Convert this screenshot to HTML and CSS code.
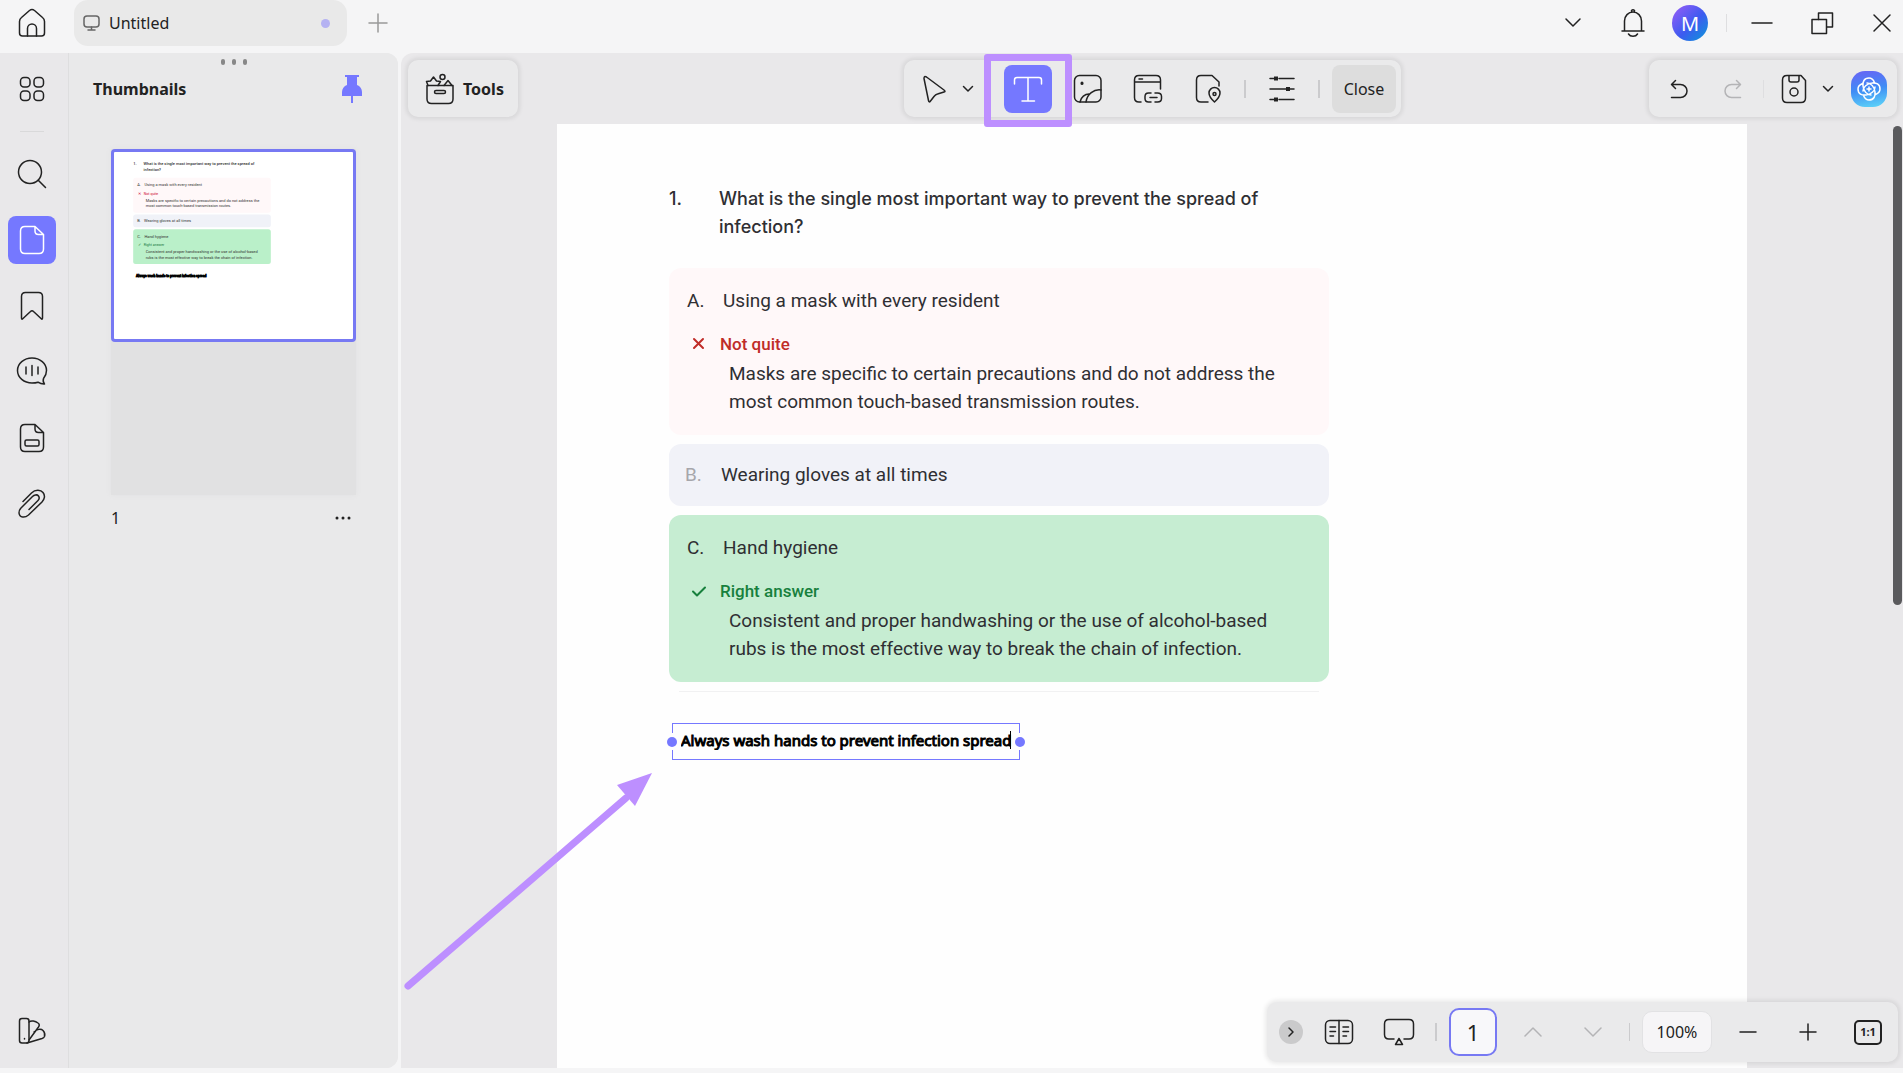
FILE: index.html
```html
<!DOCTYPE html>
<html lang="en">

<head>
    <meta charset="UTF-8">
    <meta name="viewport" content="width=device-width, initial-scale=1.0">
    <title>Untitled</title>
    <link rel="stylesheet" href="styles.css">
</head>

<body>

    <!-- Title bar -->
    <header class="titlebar">
        <button class="icon-btn" aria-label="Home">
            <svg width="30" height="30" viewBox="0 0 30 30"><path d="M2.500 13.500q0-2.500 2-4L12.500 2.500q2.500-2 5 0l8 7q2 1.500 2 4V25q0 3-3 3H5.500q-3 0-3-3z"/><path d="M10.500 28v-7.500a4.500 4.500 0 0 1 9 0V28"/></svg>
        </button>
        <div class="tab">
            <svg class="tab-icon" width="18" height="18" viewBox="0 0 18 18"><rect x="1" y="2" width="15" height="11" rx="3"/><path d="M8.500 13v3M5 16h7"/></svg>
            <span class="tab-name">Untitled</span>
            <span class="tab-dot"></span>
        </div>
        <button class="icon-btn new-tab" aria-label="New tab">
            <svg width="20" height="20" viewBox="0 0 20 20"><path d="M10 1v18M1 10h18"/></svg>
        </button>

        <div class="account">
            <button class="window-btn" aria-label="More tabs">
                <svg width="18" height="12" viewBox="0 0 18 12"><path d="M2 2l7 7 7-7"/></svg>
            </button>
            <button class="window-btn" aria-label="Notifications">
                <svg width="24" height="30" viewBox="0 0 24 30"><path d="M1 23h22M3.500 23V13a8.500 9 0 0 1 17 0v10M7.500 26a5 4 0 0 0 9 0M10.500 4V2.500q1.500-1.500 3 0V4"/></svg>
            </button>
            <button class="avatar" aria-label="Account">M</button>
        </div>
        <span class="separator"></span>
        <div class="window-controls">
            <button class="window-btn" aria-label="Minimize">
                <svg width="22" height="22" viewBox="0 0 22 22"><path d="M1 11h20"/></svg>
            </button>
            <button class="window-btn" aria-label="Restore">
                <svg width="24" height="24" viewBox="0 0 24 24"><path d="M8.500 8.500V2h14v14H17"/><rect x="2" y="8.500" width="14.500" height="14"/></svg>
            </button>
            <button class="window-btn" aria-label="Close window">
                <svg width="20" height="20" viewBox="0 0 20 20"><path d="M2 2l16 16M18 2L2 18"/></svg>
            </button>
        </div>
    </header>

    <div class="workspace">

        <aside class="sidebar">
            <!-- Icon rail -->
            <nav class="rail">
                <button class="icon-btn" aria-label="Apps">
                    <svg width="26" height="26" viewBox="0 0 26 26"><rect x="1.500" y="1.500" width="9.500" height="9.500" rx="3.500"/><rect x="15" y="1.500" width="9.500" height="9.500" rx="3.500"/><rect x="1.500" y="15" width="9.500" height="9.500" rx="3.500"/><rect x="15" y="15" width="9.500" height="9.500" rx="3.500"/></svg>
                </button>
                <span class="rail-line"></span>
                <button class="icon-btn" aria-label="Search">
                    <svg width="30" height="30" viewBox="0 0 30 30"><circle cx="13" cy="13" r="11.500"/><path d="M21.500 21.500l7 7"/></svg>
                </button>
                <button class="icon-btn active" aria-label="Thumbnails">
                    <svg width="26" height="30" viewBox="0 0 26 30"><path d="M16 1.500H6q-4.500 0-4.500 4.500v18q0 4.500 4.500 4.500h14q4.500 0 4.500-4.500V9.500zM16 1.500V6q0 3.500 3.500 3.500h5"/></svg>
                </button>
                <button class="icon-btn" aria-label="Bookmarks">
                    <svg width="26" height="30" viewBox="0 0 26 30"><path d="M2.500 5.500q0-4 4-4h13q4 0 4 4v21.500q0 2-1.500.5l-7.500-7q-1.500-1.500-3 0l-7.500 7q-1.500 1.500-1.500-.5z"/></svg>
                </button>
                <button class="icon-btn" aria-label="Comments">
                    <svg width="32" height="30" viewBox="0 0 32 30"><path d="M27.500 21.500q3-3.500 3-8C30.500 6.500 24 1 16 1S1.500 6.500 1.500 13.500 8 26 16 26q3.500 0 6-.8 3 2 6.500 1.800-2-2-1-5.500z"/><path d="M10 10v7M16 8.500v10M22 10v7"/></svg>
                </button>
                <button class="icon-btn" aria-label="Fields">
                    <svg width="26" height="30" viewBox="0 0 26 30"><path d="M16 1.500H6q-4.500 0-4.500 4.500v18q0 4.500 4.500 4.500h14q4.500 0 4.500-4.500V9.500zM16 1.500V6q0 3.500 3.500 3.500h5"/><rect x="6" y="17" width="14" height="6" rx="1.500"/></svg>
                </button>
                <button class="icon-btn" aria-label="Attachments">
                    <svg width="30" height="30" viewBox="0 0 30 30"><path d="M6 12.500l8.500-8.500c4-4 9.500-3 11.500-.5 2.500 3 1.500 7-1 9.500L11.500 26c-3.500 3-9 3-9.500-2 0-2 .5-3.500 2-5L15.500 7.500c1.500-1.500 4.500-2.500 6-.5 1 1.500.5 3.500-.5 4.500l-9 9"/></svg>
                </button>
                <button class="icon-btn rail-bottom" aria-label="Theme">
                    <svg width="30" height="28" viewBox="0 0 30 28"><rect x="2.500" y="1.500" width="9.500" height="24.500" rx="2.500"/><path d="M12 5c2-2 6.500-1 9 1 1.500 1 1.500 2.500.5 4L12 23M17 15c3-3 7-3.500 9-1.500 1.500 1.500 2 4.500 1.500 6-.5 1-1 1.500-2.500 2L10 26"/><path d="M7.500 21.500v.5"/></svg>
                </button>
            </nav>

            <!-- Thumbnails panel -->
            <section class="panel">
                <span class="grip"><i></i><i></i><i></i></span>
                <div class="panel-head">
                    <h2>Thumbnails</h2>
                    <button class="pin" aria-label="Pin panel">
                        <svg width="20" height="30" viewBox="0 0 20 30"><path d="M3 1h14v2h-2v8c3 1 5 4 5 7v4h-9v7H9v-7H0v-4c0-3 2-6 5-7V3H3z"/></svg>
                    </button>
                </div>
                <div class="thumb">
                    <button class="thumb-page" aria-label="Page 1">
                        <svg viewBox="20 20 1146 907" preserveAspectRatio="xMidYMin slice">
                            <rect class="mini-wrong" x="112" y="144" width="660" height="167" rx="12"/>
                            <rect class="mini-plain" x="112" y="320" width="660" height="61" rx="12"/>
                            <rect class="mini-right" x="112" y="390" width="660" height="167" rx="12"/>
                            <text class="mini-title" x="112" y="81">1.</text>
                            <text class="mini-title" x="162" y="81">What is the single most important way to prevent the spread of</text>
                            <text class="mini-title" x="162" y="109">infection?</text>
                            <text x="131" y="184">A.</text>
                            <text x="166" y="184">Using a mask with every resident</text>
                            <text class="mini-red" x="133" y="228">✕</text>
                            <text class="mini-red" x="163" y="228">Not quite</text>
                            <text x="172" y="258">Masks are specific to certain precautions and do not address the</text>
                            <text x="172" y="286">most common touch-based transmission routes.</text>
                            <text x="131" y="358">B.</text>
                            <text x="164" y="358">Wearing gloves at all times</text>
                            <text x="131" y="430">C.</text>
                            <text x="166" y="430">Hand hygiene</text>
                            <text class="mini-green" x="133" y="472">✓</text>
                            <text class="mini-green" x="163" y="472">Right answer</text>
                            <text x="172" y="505">Consistent and proper handwashing or the use of alcohol-based</text>
                            <text x="172" y="533">rubs is the most effective way to break the chain of infection.</text>
                            <text class="mini-note" x="126" y="621">Always wash hands to prevent infection spread</text>
                        </svg>
                    </button>
                </div>
                <div class="thumb-label">
                    <span>1</span>
                    <button class="more" aria-label="Page options">
                        <svg width="18" height="4" viewBox="0 0 18 4"><circle cx="3" cy="2" r="1.500"/><circle cx="9" cy="2" r="1.500"/><circle cx="15" cy="2" r="1.500"/></svg>
                    </button>
                </div>
            </section>
        </aside>

        <main class="canvas">
            <!-- Toolbars -->
            <div class="toolbars">
                <button class="pill tools">
                    <svg width="30" height="32" viewBox="0 0 30 32"><path d="M2 12.500h26V26q0 4.500-4.500 4.500h-17Q2 30.500 2 26z"/><rect x="9.500" y="17.500" width="11" height="3" rx="1.500"/><path d="M3 12.500L1.500 8.500l4-.5 3-4 3 4 4 .500-2.500 4M19 12.500l4-5 4 5"/><circle cx="17.500" cy="4" r="2.500"/></svg>
                    Tools
                </button>

                <div class="pill edit-bar">
                    <div class="split edit-split">
                        <button class="icon-btn" aria-label="Select">
                            <svg width="26" height="30" viewBox="0 0 26 30"><path d="M3 4.500q0-3 2.500-1.500l17.500 13q2 1.500 0 2l-6.500 2q-2 .5-3.500 2.500l-3.500 4.500q-1.500 2-2-.5z"/></svg>
                        </button>
                        <button class="chevron" aria-label="Select options">
                            <svg width="12" height="8" viewBox="0 0 12 8"><path d="M1.500 1.500L6 6l4.500-4.500"/></svg>
                        </button>
                    </div>
                    <button class="icon-btn active marked" aria-label="Add text">
                        <svg width="30" height="28" viewBox="0 0 30 28"><path d="M1.500 9V5q0-2.500 2.500-2.500h22q2.500 0 2.500 2.500v4M15 2.500V26M9 26h12.500"/></svg>
                    </button>
                    <button class="icon-btn" aria-label="Add image">
                        <svg width="30" height="30" viewBox="0 0 30 30"><rect x="1.500" y="1.500" width="26.500" height="26.500" rx="5"/><path d="M7 28c1-5 5-8 9-8M13 28c1-8 8-13 15-12"/><path class="dot" d="M9 9v.5"/></svg>
                    </button>
                    <button class="icon-btn" aria-label="Add link">
                        <svg width="30" height="30" viewBox="0 0 30 30"><path d="M8 28H6q-4.500 0-4.500-4.500V6q0-4.500 4.500-4.500h17q4.500 0 4.500 4.500v9M1.500 8H27.500M6 5h3.500M18 28h-2.500q-3.500 0-3.500-3.500v-2q0-3.500 3.500-3.500H18M22 19h2.500q4 0 4 3.500v2q0 3.500-4 3.500H22M17 23.500h7"/></svg>
                    </button>
                    <button class="icon-btn" aria-label="Add location">
                        <svg width="26" height="30" viewBox="0 0 26 30"><path d="M13 28H6q-4.500 0-4.500-4.500V6q0-4.500 4.500-4.500h11L24 8v4"/><path d="M19.500 28q-5.500-5-5.500-9a5.500 5.500 0 0 1 11 0q0 4-5.500 9z"/><circle cx="19.500" cy="20" r="1.500"/></svg>
                    </button>
                    <span class="divider"></span>
                    <button class="icon-btn" aria-label="Properties">
                        <svg width="26" height="28" viewBox="0 0 26 28"><path d="M1 3.500h5M10 3.500h15M1 14h16M21 14h4M1 24.500h5M10 24.500h15"/><path class="knob" d="M7 1.500v4M19 12v4M7 22.500v4"/></svg>
                    </button>
                    <span class="divider"></span>
                    <button class="close-btn">Close</button>
                </div>

                <div class="pill history-bar">
                    <button class="icon-btn" aria-label="Undo">
                        <svg width="20" height="20" viewBox="0 0 20 20"><path d="M6.500 1.500l-4 4 4 4M3 5.500h8.500a6.500 6.500 0 0 1 0 13H2.500"/></svg>
                    </button>
                    <button class="icon-btn faded" aria-label="Redo" disabled>
                        <svg width="20" height="20" viewBox="0 0 20 20"><path d="M13.500 1.500l4 4-4 4M17 5.500H8.500a6.500 6.500 0 0 0 0 13h9"/></svg>
                    </button>
                    <span class="separator"></span>
                    <div class="split history-split">
                        <button class="icon-btn" aria-label="Save">
                            <svg width="26" height="30" viewBox="0 0 26 30"><path d="M6 1.500h14l4.500 5V24q0 4.500-4.500 4.500H6q-4.500 0-4.500-4.500V6q0-4.500 4.500-4.500z"/><path d="M8 2v4q0 2 2 2h6q2 0 2-2V2"/><circle cx="13" cy="18" r="4"/></svg>
                        </button>
                        <button class="chevron" aria-label="Save options">
                            <svg width="12" height="8" viewBox="0 0 12 8"><path d="M1.500 1.500L6 6l4.500-4.500"/></svg>
                        </button>
                    </div>
                    <button class="assistant" aria-label="Assistant">
                        <svg width="28" height="28" viewBox="0 0 28 28"><path d="M14 3c-5 0-6.500 4-6 8 .5 5 4 9 8 9M25 14c0-5-4-6.500-8-6-5 .5-9 4-9 8M14 25c5 0 6.500-4 6-8-.5-5-4-9-8-9M3 14c0 5 4 6.500 8 6 5-.5 9-4 9-8M14 3c3 0 4.500 2 5.500 4.500M25 14c0 3-2 4.500-4.500 5.500M14 25c-3 0-4.500-2-5.500-4.500M3 14c0-3 2-4.500 4.500-5.500"/><path d="M14 12v4M12 14h4"/></svg>
                    </button>
                </div>
            </div>

            <!-- Document page -->
            <article class="page">
                <div class="quiz">
                    <h1 class="question"><span>1.</span>What is the single most important way to prevent the spread of infection?</h1>

                    <div class="option wrong">
                        <p class="choice"><span>A.</span>Using a mask with every resident</p>
                        <p class="verdict">
                            <svg width="16" height="16" viewBox="0 0 16 16"><path d="M3 3l9 9M12 3l-9 9"/></svg>
                            Not quite
                        </p>
                        <p class="reason">Masks are specific to certain precautions and do not address the most common touch-based transmission routes.</p>
                    </div>

                    <div class="option plain">
                        <p class="choice"><span>B.</span>Wearing gloves at all times</p>
                    </div>

                    <div class="option right">
                        <p class="choice"><span>C.</span>Hand hygiene</p>
                        <p class="verdict">
                            <svg width="16" height="16" viewBox="0 0 16 16"><path d="M2 8.500L6 12.500l8-8"/></svg>
                            Right answer
                        </p>
                        <p class="reason">Consistent and proper handwashing or the use of alcohol-based rubs is the most effective way to break the chain of infection.</p>
                    </div>

                    <hr>

                    <div class="text-box">
                        <input type="text" aria-label="Text box" value="Always wash hands to prevent infection spread">
                        <span class="caret"></span>
                        <span class="handle handle-left"></span>
                        <span class="handle handle-right"></span>
                    </div>
                </div>
            </article>

            <span class="scrollbar"></span>

            <svg class="arrow" width="256" height="226" viewBox="0 0 256 226"><path d="M7 217L225 29"/><path class="arrow-head" d="M251 4l-35 12 18 21z"/></svg>

            <!-- Page controls -->
            <div class="pill page-bar">
                <button class="collapse" aria-label="Collapse">
                    <svg width="8" height="12" viewBox="0 0 8 12"><path d="M2 2l4 4-4 4"/></svg>
                </button>
                <button class="icon-btn" aria-label="Reading view">
                    <svg width="30" height="26" viewBox="0 0 30 26"><rect x="1.500" y="1.500" width="27" height="23" rx="4.500"/><path d="M15 1.500v23M6 8h5.500M6 12.500h5.500M6 17h3.500M19 8h5.500M19 12.500h5.500M19 17h3.500"/></svg>
                </button>
                <button class="icon-btn" aria-label="Slideshow">
                    <svg width="32" height="28" viewBox="0 0 32 28"><path d="M11 21H6q-4.500 0-4.500-4.500V6Q1.500 1.500 6 1.500h20q4.500 0 4.500 4.500v10.500Q30.500 21 26 21h-5M16 20.500l-3.500 6h7z"/></svg>
                </button>
                <span class="divider"></span>
                <input class="page-number" type="text" aria-label="Page number" value="1">
                <button class="icon-btn faded" aria-label="Previous page">
                    <svg width="18" height="12" viewBox="0 0 18 12"><path d="M1 10l8-8 8 8"/></svg>
                </button>
                <button class="icon-btn faded" aria-label="Next page">
                    <svg width="18" height="12" viewBox="0 0 18 12"><path d="M1 2l8 8 8-8"/></svg>
                </button>
                <span class="divider thin"></span>
                <input class="zoom" type="text" aria-label="Zoom" value="100%">
                <button class="icon-btn" aria-label="Zoom out">
                    <svg width="18" height="18" viewBox="0 0 18 18"><path d="M1 9h16"/></svg>
                </button>
                <button class="icon-btn" aria-label="Zoom in">
                    <svg width="18" height="18" viewBox="0 0 18 18"><path d="M9 1v16M1 9h16"/></svg>
                </button>
                <button class="icon-btn" aria-label="Actual size"><span class="ratio">1:1</span></button>
            </div>
        </main>
    </div>

</body>

</html>
```
FILE: styles.css
```css
* {
    margin: 0;
    padding: 0;
    box-sizing: border-box;
}

body {
    height: 100vh;
    display: flex;
    flex-direction: column;
    background-color: #f5f5f6;
    color: #222;
    font-family: "Noto Sans", sans-serif;
    font-size: 16px;
    overflow: hidden;
}

button,
input {
    font: inherit;
    color: inherit;
    border: none;
    background: none;
    outline: none;
}

button {
    display: flex;
    align-items: center;
    justify-content: center;
    cursor: pointer;
}

svg {
    display: block;
    flex-shrink: 0;
    fill: none;
    stroke: currentColor;
    stroke-width: 1.5;
    stroke-linecap: round;
    stroke-linejoin: round;
}

.dot {
    stroke-width: 3;
}

.knob {
    stroke-width: 4;
    stroke-linecap: butt;
}

.icon-btn {
    width: 48px;
    height: 48px;
    flex-shrink: 0;
    border-radius: 8px;
}

.active {
    background-color: #7578ff;
    color: white;
}

.faded {
    color: #b4b4b6;
}

.separator {
    width: 1px;
    height: 18px;
    background-color: #dedee0;
}

.divider {
    width: 2px;
    height: 18px;
    background-color: #cbcbcd;
}

.divider.thin {
    width: 1px;
}

/* Title bar */
.titlebar {
    height: 53px;
    padding: 0 0 7px 8px;
    display: flex;
    align-items: center;
}

.tab {
    width: 273px;
    height: 46px;
    margin: 0 7px 0 18px;
    padding: 0 17px 0 9px;
    display: flex;
    align-items: center;
    gap: 8px;
    background-color: #e9e9e9;
    border-radius: 14px;
}

.tab-icon {
    color: #666;
}

.tab-dot {
    width: 9px;
    height: 9px;
    margin-left: auto;
    border-radius: 50%;
    background-color: #b5b2f2;
}

.new-tab {
    color: #999;
}

.account {
    margin: 0 18px 0 auto;
    display: flex;
    align-items: center;
    gap: 18px;
}

.window-controls {
    margin-left: 14px;
    display: flex;
    gap: 18px;
}

.window-btn {
    width: 42px;
    height: 42px;
}

.avatar {
    width: 36px;
    height: 36px;
    border-radius: 50%;
    background: linear-gradient(135deg, #8b5cf6 10%, #3c5bf0 55%, #0a9ad8);
    color: white;
    font-size: 20px;
}

/* Sidebar */
.workspace {
    flex: 1;
    min-height: 0;
    padding-bottom: 5px;
    display: flex;
    gap: 3px;
}

.sidebar {
    display: flex;
    background-color: #e9e8ea;
    border-radius: 0 12px 12px 0;
}

.rail {
    width: 69px;
    padding: 12px 0 13px 8px;
    display: flex;
    flex-direction: column;
    gap: 18px;
    border-right: 1px solid #dededf;
}

.rail-line {
    width: 24px;
    height: 1px;
    margin-left: 12px;
    background-color: #d9d9da;
}

.rail-bottom {
    margin-top: auto;
}

.panel {
    width: 329px;
    padding: 6px 42px 0;
    background-color: #e9e9ea;
    border-radius: 0 12px 12px 0;
}

.grip {
    display: flex;
    justify-content: center;
    gap: 7px;
}

.grip i {
    width: 4px;
    height: 6px;
    border-radius: 2px;
    background-color: #888;
}

.panel-head {
    height: 48px;
    margin: 0 -6px 0 -18px;
    display: flex;
    align-items: center;
    justify-content: space-between;
}

.panel-head h2 {
    font-size: 16px;
    font-weight: 700;
}

.pin svg {
    fill: #7578ff;
    stroke: none;
}

.thumb {
    height: 346px;
    margin-top: 36px;
    background-color: #e1e1e2;
    box-shadow: 0 0 5px #e1e1e2;
}

.thumb-page {
    width: 100%;
    height: 193px;
    border: 3px solid #7779f3;
    border-radius: 4px;
    background-color: white;
}

.thumb-page svg {
    width: 100%;
    height: 100%;
    fill: #333;
    stroke: none;
    font-family: Roboto, sans-serif;
    font-size: 19px;
}

.mini-title {
    font-weight: 500;
}

.mini-wrong {
    fill: #fff8f9;
}

.mini-plain {
    fill: #f0f2f8;
}

.mini-right {
    fill: #baf0c9;
}

.mini-red {
    fill: #c03;
    font-size: 17px;
}

.mini-green {
    fill: #17753a;
    font-size: 17px;
}

.mini-note {
    fill: black;
    stroke: black;
    stroke-width: 4px;
    font-size: 16px;
    font-weight: 700;
}

.thumb-label {
    margin: 12px 4px 0 0;
    display: flex;
    align-items: center;
    justify-content: space-between;
}

.more svg {
    fill: #222;
    stroke: none;
}

/* Canvas and floating toolbars */
.canvas {
    position: relative;
    flex: 1;
    min-width: 0;
    padding-top: 7px;
    display: flex;
    flex-direction: column;
    gap: 7px;
    background-color: #e9e8ea;
    border-radius: 12px 0 0 0;
}

.pill {
    display: flex;
    align-items: center;
    background-color: #eaeaeb;
    border-radius: 10px;
    box-shadow: 0 0 4px 2px rgba(0, 0, 0, 0.08);
}

.toolbars {
    padding: 0 6px 0 7px;
    display: grid;
    grid-template-columns: 1fr auto 1fr;
    z-index: 1;
}

.toolbars .pill {
    height: 57px;
}

.tools {
    justify-self: start;
    gap: 8px;
    padding: 0 14px 0 17px;
    font-weight: 700;
}

.edit-bar {
    gap: 12px;
    padding: 0 5px 0 6px;
}

.split {
    display: flex;
    align-items: center;
}

.edit-split {
    padding-right: 14px;
}

.history-split {
    padding-right: 7px;
}

.chevron {
    width: 20px;
    height: 48px;
}

/* Highlight frame around the text tool */
.marked {
    position: relative;
}

.marked::after {
    content: "";
    position: absolute;
    inset: -11px -20px -14px -20px;
    border: 7px solid #bd8fff;
    border-radius: 3px;
}

.close-btn {
    height: 48px;
    padding: 0 12px;
    border-radius: 8px;
    background-color: #dddddd;
}

.history-bar {
    justify-self: end;
    gap: 6px;
    padding: 0 10px 0 6px;
}

.assistant {
    width: 36px;
    height: 36px;
    border-radius: 14px;
    background: linear-gradient(170deg, #6a62f5, #3f8df5 50%, #5fd8f8);
    color: white;
}

/* Document page */
.page {
    flex: 1;
    min-height: 0;
    margin: 0 156px;
    padding: 61px 112px 0;
    background-color: #fefefe;
    font-family: Roboto, sans-serif;
    font-size: 19px;
    line-height: 28px;
    color: #2f2f33;
}

.quiz {
    max-width: 660px;
}

.question {
    width: 610px;
    max-width: 100%;
    margin-bottom: 27px;
    padding-left: 50px;
    font-family: Inter, sans-serif;
    font-size: 18px;
    font-weight: 500;
}

.question span {
    float: left;
    margin-left: -50px;
}

.option {
    margin-bottom: 9px;
    padding: 19px 18px;
    border-radius: 12px;
}

.choice {
    display: flex;
}

.choice span {
    width: 36px;
}

.verdict {
    display: flex;
    align-items: center;
    gap: 13px;
    margin: 15px 0 2px 4px;
    font-size: 17px;
    font-weight: 500;
}

.verdict svg {
    stroke-width: 2;
}

.reason {
    padding: 0 30px 0 42px;
}

.wrong {
    background-color: #fff8f9;
}

.wrong .verdict {
    color: #c02c28;
}

.plain {
    padding: 17px 16px;
    background-color: #f1f2f8;
}

.plain .choice span {
    color: #a6a6ab;
}

.right {
    background-color: #c6edd2;
}

.right .verdict {
    color: #17803d;
}

hr {
    margin: 0 10px;
    border: none;
    border-top: 1px solid #f1f1f2;
}

.text-box {
    position: relative;
    width: 348px;
    height: 37px;
    margin: 31px 0 0 3px;
    border: 1px solid #7578ff;
}

.text-box input {
    width: 100%;
    height: 100%;
    padding: 0 0 4px 8px;
    font-family: "Noto Sans", sans-serif;
    font-size: 15px;
    color: black;
    -webkit-text-stroke: 1px black;
}

.caret {
    position: absolute;
    top: 7px;
    right: 8px;
    width: 1px;
    height: 18px;
    background-color: black;
}

.handle {
    position: absolute;
    top: 9px;
    width: 10px;
    height: 17px;
    display: flex;
    align-items: center;
    justify-content: center;
    background: linear-gradient(#fefefe, #fefefe) center / 2px 100% no-repeat;
}

.handle::after {
    content: "";
    flex-shrink: 0;
    width: 10px;
    height: 10px;
    border-radius: 50%;
    background-color: #7578ff;
}

.handle-left {
    left: -6px;
}

.handle-right {
    right: -6px;
}

.scrollbar {
    position: absolute;
    top: 73px;
    right: 1px;
    width: 9px;
    height: 479px;
    border-radius: 5px;
    background-color: #5a5a5d;
}

.arrow {
    position: absolute;
    left: 0;
    top: 716px;
    color: #bd8fff;
    stroke-width: 7;
}

.arrow-head {
    fill: #bd8fff;
    stroke: none;
}

/* Page controls */
.page-bar {
    position: absolute;
    right: 5px;
    bottom: 6px;
    height: 60px;
    gap: 12px;
    padding: 0 6px 0 12px;
}

.collapse {
    width: 24px;
    height: 24px;
    border-radius: 50%;
    background-color: #cacacb;
}

.page-number {
    width: 48px;
    height: 48px;
    border: 2px solid #7779f3;
    border-radius: 10px;
    background-color: #f8f8fa;
    font-size: 22px;
    text-align: center;
}

.zoom {
    width: 70px;
    height: 42px;
    border: 1px solid #e2e2e4;
    border-radius: 10px;
    background-color: #f6f5f7;
    text-align: center;
}

.ratio {
    width: 28px;
    height: 25px;
    border: 2px solid #222;
    border-radius: 5px;
    font-size: 11px;
    font-weight: 700;
    line-height: 20px;
}
```
